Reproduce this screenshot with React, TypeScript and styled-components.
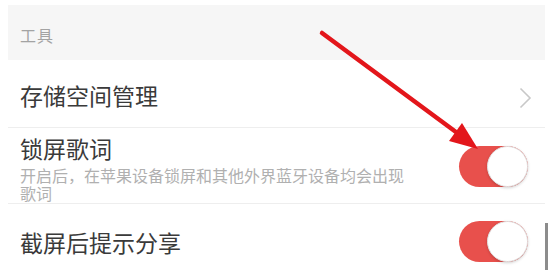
import React from "react";
import styled, { createGlobalStyle } from "styled-components";

const Global = createGlobalStyle`
  html, body { margin: 0; padding: 0; background: #ffffff; }
  body { font-family: "Noto Sans CJK SC", "Noto Sans", sans-serif; overflow: hidden; }
`;

const Page = styled.div`
  position: relative;
  width: 550px;
  height: 270px;
  overflow: hidden;
  background: #fff;
`;

const List = styled.div`
  margin: 5px 5px 0 8px;
  display: flex;
  flex-direction: column;
`;

const SectionHeader = styled.div`
  height: 55px;
  background: #f6f6f6;
  display: flex;
  align-items: center;
  padding: 4px 0 0 12px;
  box-sizing: border-box;
  font-size: 16px;
  color: #a3a3a3;
  letter-spacing: 1px;
`;

const Row = styled.div<{ $height: number; $top: number }>`
  height: ${(p) => p.$height}px;
  box-sizing: border-box;
  display: flex;
  align-items: center;
  padding: ${(p) => p.$top}px 17px 0 12px;
  border-bottom: 1px solid #eeeeee;
`;

const TextBlock = styled.div`
  flex: 1;
  display: flex;
  flex-direction: column;
  min-width: 0;
`;

const Title = styled.div`
  font-size: 23px;
  line-height: 26px;
  color: #3a3a3a;
`;

const Subtitle = styled.div`
  margin-top: 5px;
  width: 392px;
  font-size: 16px;
  line-height: 18px;
  color: #b0b0b0;
`;

const Chevron = styled.svg`
  width: 13px;
  height: 22px;
  margin-right: -4px;
  margin-top: 6px;
`;

const Toggle = styled.div<{ $shift?: number }>`
  position: relative;
  width: 69px;
  height: 41px;
  border-radius: 21px;
  background: #e8504c;
  margin-top: ${(p) => p.$shift ?? 0}px;
  flex-shrink: 0;
`;

const Knob = styled.div`
  position: absolute;
  right: 0;
  top: 0;
  width: 41px;
  height: 41px;
  border-radius: 50%;
  background: #ffffff;
  box-sizing: border-box;
  border: 1px solid #e2e2e2;
  box-shadow: 0 1px 3px rgba(0, 0, 0, 0.18);
`;

const ScrollBar = styled.div`
  position: absolute;
  left: 545px;
  top: 223px;
  width: 3px;
  height: 60px;
  background: #8c8c8c;
`;

const ArrowSvg = styled.svg`
  position: absolute;
  left: 0;
  top: 0;
  pointer-events: none;
`;

export default function App() {
  return (
    <Page>
      <Global />
      <List>
        <SectionHeader>工具</SectionHeader>
        <Row $height={68} $top={3}>
          <TextBlock>
            <Title>存储空间管理</Title>
          </TextBlock>
          <Chevron viewBox="0 0 13 22">
            <path d="M1.5 1.5 L11 11 L1.5 20.5" fill="none" stroke="#c8c8c8" strokeWidth="1.6" />
          </Chevron>
        </Row>
        <Row $height={76} $top={6}>
          <TextBlock>
            <Title>锁屏歌词</Title>
            <Subtitle>开启后，在苹果设备锁屏和其他外界蓝牙设备均会出现歌词</Subtitle>
          </TextBlock>
          <Toggle $shift={-4}>
            <Knob />
          </Toggle>
        </Row>
        <Row $height={76} $top={0}>
          <TextBlock>
            <Title>截屏后提示分享</Title>
          </TextBlock>
          <Toggle $shift={-1}>
            <Knob />
          </Toggle>
        </Row>
      </List>
      <ScrollBar />
      <ArrowSvg width="550" height="270" viewBox="0 0 550 270">
        <line x1="322" y1="33" x2="460" y2="135" stroke="#e3161b" strokeWidth="4.5" strokeLinecap="round" />
        <polygon points="478,149 449,141 462,123" fill="#e3161b" />
      </ArrowSvg>
    </Page>
  );
}
